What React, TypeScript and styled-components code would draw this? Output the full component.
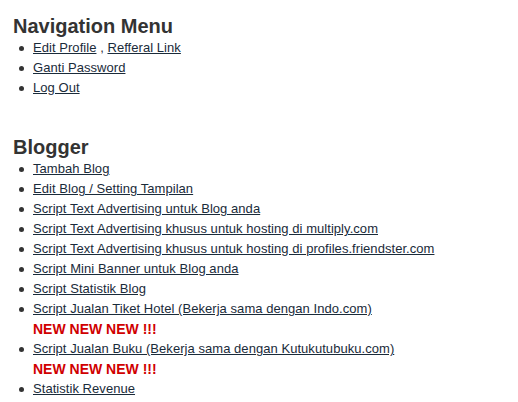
import React from "react";
import styled, { createGlobalStyle } from "styled-components";

const Global = createGlobalStyle`
  html, body { margin: 0; padding: 0; background: #fff; }
  body { font-family: "Liberation Sans", Arial, sans-serif; }
`;

const Page = styled.div`
  padding: 15px 0 0 13px;
  display: flex;
  flex-direction: column;
  gap: 38px;
  color: #333;
`;

const Section = styled.section`
  display: flex;
  flex-direction: column;
`;

const Heading = styled.h2`
  margin: 0;
  font-size: 20px;
  line-height: 23px;
  font-weight: bold;
  color: #333;
`;

const List = styled.ul`
  margin: 0;
  padding: 0 0 0 20px;
  list-style: none;
  font-size: 13px;
  line-height: 20px;
  letter-spacing: 0.05px;
`;

const Item = styled.li`
  position: relative;
  color: #333;
  &::before {
    content: "";
    position: absolute;
    left: -14px;
    top: 8px;
    width: 5px;
    height: 5px;
    border-radius: 50%;
    background: #333;
  }
`;

const Link = styled.a`
  color: #1a2b3a;
  text-decoration: underline;
`;

const NewBadge = styled.div`
  color: #d00000;
  font-weight: bold;
  font-size: 14px;
  line-height: 20px;
  letter-spacing: 0;
`;

type Entry = { label: string; isNew?: boolean };

const blogger: Entry[] = [
  { label: "Tambah Blog" },
  { label: "Edit Blog / Setting Tampilan" },
  { label: "Script Text Advertising untuk Blog anda" },
  { label: "Script Text Advertising khusus untuk hosting di multiply.com" },
  { label: "Script Text Advertising khusus untuk hosting di profiles.friendster.com" },
  { label: "Script Mini Banner untuk Blog anda" },
  { label: "Script Statistik Blog" },
  { label: "Script Jualan Tiket Hotel (Bekerja sama dengan Indo.com)", isNew: true },
  { label: "Script Jualan Buku (Bekerja sama dengan Kutukutubuku.com)", isNew: true },
  { label: "Statistik Revenue" },
];

export default function App() {
  return (
    <>
      <Global />
      <Page>
        <Section>
          <Heading>Navigation Menu</Heading>
          <List>
            <Item>
              <Link href="#">Edit Profile</Link> , <Link href="#">Refferal Link</Link>
            </Item>
            <Item>
              <Link href="#">Ganti Password</Link>
            </Item>
            <Item>
              <Link href="#">Log Out</Link>
            </Item>
          </List>
        </Section>
        <Section>
          <Heading>Blogger</Heading>
          <List>
            {blogger.map((e) => (
              <Item key={e.label}>
                <Link href="#">{e.label}</Link>
                {e.isNew && <NewBadge>NEW NEW NEW !!!</NewBadge>}
              </Item>
            ))}
          </List>
        </Section>
      </Page>
    </>
  );
}
